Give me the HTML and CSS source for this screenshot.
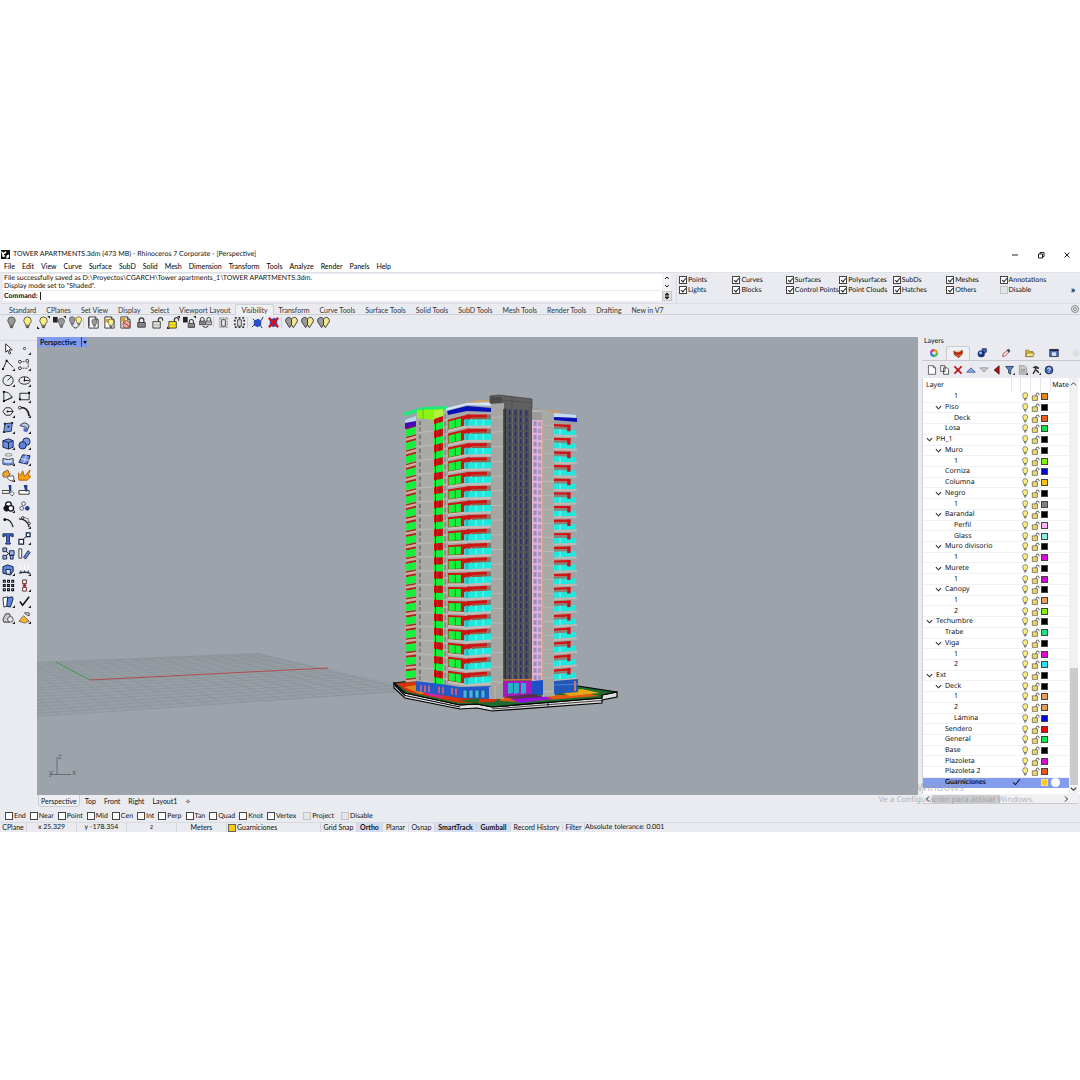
FILE: index.html
```html
<!DOCTYPE html>
<html lang="en">
<head>
<meta charset="utf-8">
<title>TOWER APARTMENTS.3dm - Rhinoceros 7 Corporate</title>
<link rel="stylesheet" href="styles.css">
</head>
<body>
<svg class="sprite" aria-hidden="true">
  <symbol id="bulb" viewBox="0 0 14 14"><path d="M7 1a4 4 0 0 0-4 4c0 2 2 3 2 5h4c0-2 2-3 2-5a4 4 0 0 0-4-4z" stroke="#555" stroke-width="1"/><path d="M5 11h4M5.500 12.500h3" stroke="#333"/></symbol>
  <symbol id="lock" viewBox="0 0 14 14"><path d="M4.500 7V4.500a2.500 2.500 0 0 1 5 0V7" fill="none" stroke="#333" stroke-width="1.300"/><path d="M3 7h8v5H3z" stroke="#333"/><path d="M4 9h6M4 11h6" stroke="#555" stroke-width=".6"/></symbol>
  <symbol id="unlock" viewBox="0 0 14 14"><path d="M8 7V3.500a2.300 2.300 0 0 1 4.500 0V5" fill="none" stroke="#333" stroke-width="1.300"/><path d="M2 6h8v7H2z" stroke="#443"/><path d="M3 9.500h6" stroke="#997" stroke-width=".6"/></symbol>
  <symbol id="corner" viewBox="0 0 14 14"><path d="M14 11v3h-3z" fill="#222"/></symbol>
  <symbol id="page" viewBox="0 0 14 14"><path d="M2 1h7l3 3v9H2z" fill="#fff" stroke="#333"/><path d="M9 1v3h3" fill="none" stroke="#333"/></symbol>
  <symbol id="split" viewBox="0 0 14 14"><path d="M4 1.500a3.500 3.500 0 0 0-3 5l4 6 2-3V4C6.500 2 5.500 1.500 4 1.500z" fill="#9a9a9a" stroke="#333"/><path d="M10 1.500a3.500 3.500 0 0 1 3 5l-4 6-2-3V4c.5-2 1.500-2.500 3-2.500z" fill="#f4e68c" stroke="#333"/></symbol>
  <symbol id="chev" viewBox="0 0 8 8"><path d="M1 2.500L4 5.500 7 2.500" fill="none" stroke="#333" stroke-width="1.300"/></symbol>
</svg>

<main class="app">
  <header class="titlebar">
    <svg class="logo" viewBox="0 0 10 10"><path d="M0 0h10v10H0z" fill="#111"/><path d="M0 1l3 2 2-2 1 2-3 2 2 2-3 1zM6 6l3-1v3L6 10z" fill="#fff"/></svg>
    <h1>TOWER APARTMENTS.3dm (473 MB) - Rhinoceros 7 Corporate - [Perspective]</h1>
    <div class="winbtns">
      <button aria-label="Minimize"><svg viewBox="0 0 8 8"><path d="M1 4h6"/></svg></button>
      <button aria-label="Restore"><svg viewBox="0 0 8 8"><path d="M1.500 3h4v4h-4zM3 3V1.500h4v4H5.500"/></svg></button>
      <button aria-label="Close"><svg viewBox="0 0 8 8"><path d="M1.500 1.500l5 5M6.500 1.500l-5 5"/></svg></button>
    </div>
  </header>
  <nav class="menubar">
    <button>File</button><button>Edit</button><button>View</button><button>Curve</button><button>Surface</button><button>SubD</button><button>Solid</button><button>Mesh</button><button>Dimension</button><button>Transform</button><button>Tools</button><button>Analyze</button><button>Render</button><button>Panels</button><button>Help</button>
  </nav>

  <section class="command">
    <div class="console">
      <div class="history"><p>File successfully saved as D:\Proyectos\CGARCH\Tower apartments_1\TOWER APARTMENTS.3dm.</p><p>Display mode set to "Shaded".</p></div>
      <div class="prompt"><label for="cmd">Command:</label><input id="cmd" type="text"></div>
    </div>
    <div class="consolebar">
      <svg viewBox="0 0 8 8"><path d="M2 5l2-2 2 2"/></svg>
      <svg viewBox="0 0 8 8"><path d="M2 3l2 2 2-2"/></svg>
      <button aria-label="Command history"><svg viewBox="0 0 8 8"><path d="M2 3l2-2 2 2zM2 5l2 2 2-2z" fill="#222"/></svg></button>
    </div>
    <div class="filters">
      <label><input type="checkbox" checked>Points</label><label><input type="checkbox" checked>Curves</label><label><input type="checkbox" checked>Surfaces</label><label><input type="checkbox" checked>Polysurfaces</label><label><input type="checkbox" checked>SubDs</label><label><input type="checkbox" checked>Meshes</label><label><input type="checkbox" checked>Annotations</label>
      <label><input type="checkbox" checked>Lights</label><label><input type="checkbox" checked>Blocks</label><label><input type="checkbox" checked>Control Points</label><label><input type="checkbox" checked>Point Clouds</label><label><input type="checkbox" checked>Hatches</label><label><input type="checkbox" checked>Others</label><label><input type="checkbox" disabled>Disable</label>
    </div>
    <button class="more" aria-label="More filters">»</button>
  </section>

  <nav class="tooltabs">
    <button>Standard</button><button>CPlanes</button><button>Set View</button><button>Display</button><button>Select</button><button>Viewport Layout</button><button class="on">Visibility</button><button>Transform</button><button>Curve Tools</button><button>Surface Tools</button><button>Solid Tools</button><button>SubD Tools</button><button>Mesh Tools</button><button>Render Tools</button><button>Drafting</button><button>New in V7</button>
    <svg class="gear" viewBox="0 0 10 10"><circle cx="5" cy="5" r="3.500"/><circle cx="5" cy="5" r="1.500"/></svg>
  </nav>

  <div class="toolbar">
    <button aria-label="Hide"><svg viewBox="0 0 14 14"><use href="#bulb" fill="#999"/></svg></button>
    <button aria-label="Show"><svg viewBox="0 0 14 14"><use href="#bulb" fill="#fbf07c"/></svg></button>
    <button aria-label="Show selected"><svg viewBox="0 0 14 14"><use href="#bulb" fill="#fbf07c"/><path d="M0 14v-3l3 3zM14 0v3l-3-3z" fill="#222"/></svg></button>
    <button aria-label="Isolate"><svg viewBox="0 0 14 14"><path d="M0 1h5v6H0z" fill="#222"/><use href="#bulb" x="3" y="1" fill="#999" width="12" height="13"/><path d="M14 0v3l-3-3z" fill="#222"/></svg></button>
    <button aria-label="Swap hidden"><svg viewBox="0 0 14 14"><use href="#bulb" x="-2" y="0" width="11" height="11" fill="#999"/><use href="#bulb" x="5" y="0" width="11" height="11" fill="#fbf07c"/><path d="M4 11q3 4 6 0" stroke="#222" fill="none"/></svg></button>
    <hr>
    <button aria-label="Hide in detail"><svg viewBox="0 0 14 14"><use href="#page"/><use href="#bulb" x="3" y="2" width="10" height="11" fill="#999"/><path d="M2 2v9" stroke="#222"/></svg></button>
    <button aria-label="Show in detail"><svg viewBox="0 0 14 14"><use href="#page"/><path d="M2 3h5v4H2z" fill="#d9a227"/><use href="#bulb" x="3" y="2" width="11" height="12" fill="#fbf07c"/></svg></button>
    <button aria-label="Hide layer in detail"><svg viewBox="0 0 14 14"><use href="#page"/><path d="M2 2h5v4H2z" fill="#d9a227"/><circle cx="8" cy="9" r="4" fill="#eab0a8" stroke="#843"/><path d="M5 7l6 4" stroke="#a22"/></svg></button>
    <button aria-label="Lock"><svg viewBox="0 0 14 14"><use href="#lock" fill="#999"/></svg></button>
    <button aria-label="Unlock"><svg viewBox="0 0 14 14"><use href="#unlock" fill="#ddd"/></svg></button>
    <button aria-label="Unlock selected"><svg viewBox="0 0 14 14"><use href="#unlock" fill="#ffe000"/><path d="M0 14v-3l3 3zM14 0v3l-3-3z" fill="#222"/></svg></button>
    <button aria-label="Isolate lock"><svg viewBox="0 0 14 14"><path d="M0 1h5v6H0z" fill="#222"/><use href="#lock" x="3" y="2" width="12" height="12" fill="#999"/><path d="M14 0v3l-3-3z" fill="#222"/></svg></button>
    <button aria-label="Swap locked"><svg viewBox="0 0 14 14"><use href="#lock" x="-2" y="0" width="11" height="11" fill="#999"/><use href="#lock" x="5" y="0" width="11" height="11" fill="#ddd"/><path d="M4 11q3 3 6 0" stroke="#222" fill="none"/></svg></button>
    <hr>
    <button aria-label="Control points on"><svg viewBox="0 0 14 14"><path d="M3 2v10M11 2v10M3 2h8M3 12h8" stroke="#aaa" stroke-width="2" stroke-dasharray="2 1" fill="none"/><path d="M5 4h4v7H5z" fill="#eee" stroke="#444"/></svg></button>
    <button aria-label="Control points off"><svg viewBox="0 0 14 14"><path d="M2 2h10v10H2z" stroke="#333" stroke-width="2" stroke-dasharray="2 2" fill="none"/><path d="M5 4h4v7H5z" fill="#ddd" stroke="#444"/></svg></button>
    <hr>
    <button aria-label="Show edges"><svg viewBox="0 0 14 14"><path d="M3 5l5-2 3 2v5l-4 2-4-2z" fill="#2850c8"/><path d="M1 12l3-3M11 5l2-4M2 3l2 2M10 10l2 3" stroke="#223"/></svg></button>
    <button aria-label="Hide edges"><svg viewBox="0 0 14 14"><path d="M3 4l5-2 3 2v6l-4 2-4-2z" fill="#2850c8"/><path d="M2 2l10 10M12 2L2 12" stroke="#d0101c" stroke-width="2.500"/></svg></button>
    <hr>
    <button aria-label="Hide object"><svg viewBox="0 0 14 14"><use href="#split"/></svg></button>
    <button aria-label="Show object"><svg viewBox="0 0 14 14"><use href="#split"/></svg></button>
    <button aria-label="Swap object"><svg viewBox="0 0 14 14"><use href="#split"/></svg></button>
  </div>

  <div class="workspace">
    <aside class="tools">
      <button aria-label="Select"><svg viewBox="0 0 14 14"><path d="M4 2v9l2-2 2 4 1.500-1-2-3.500H11z" fill="#fff" stroke="#222"/></svg></button>
      <button aria-label="Point"><svg viewBox="0 0 14 14"><circle cx="7" cy="7" r="1.200" fill="#fff" stroke="#333"/><use href="#corner"/></svg></button>
      <button aria-label="Polyline"><svg viewBox="0 0 14 14"><path d="M1 12L5 3l7 7" fill="none" stroke="#222"/><path d="M0 11h2v2H0zM4 2h2v2H4z"/><use href="#corner"/></svg></button>
      <button aria-label="Control point curve"><svg viewBox="0 0 14 14"><path d="M2 4h5M11 2v8M2 11h9" fill="none" stroke="#333" stroke-dasharray="2 1"/><circle cx="2" cy="4" r="1.500" fill="#fff" stroke="#222"/><circle cx="10" cy="3" r="1.500" fill="#fff" stroke="#222"/><circle cx="2" cy="11" r="1.500" fill="#fff" stroke="#222"/><use href="#corner"/></svg></button>
      <button aria-label="Circle"><svg viewBox="0 0 14 14"><circle cx="6.500" cy="7" r="5.500" fill="none" stroke="#222"/><path d="M6 7l4-4" stroke="#222"/><use href="#corner"/></svg></button>
      <button aria-label="Ellipse"><svg viewBox="0 0 14 14"><ellipse cx="7" cy="7" rx="6" ry="4" fill="none" stroke="#222"/><path d="M7 3v4h5" stroke="#222" fill="none"/><circle cx="7" cy="7" r="1"/><use href="#corner"/></svg></button>
      <button aria-label="Arc"><svg viewBox="0 0 14 14"><path d="M2 12V2q6 0 9 6zL11 8" fill="none" stroke="#222"/><path d="M1 1h2v2H1zM1 11h2v2H1z"/><use href="#corner"/></svg></button>
      <button aria-label="Rectangle"><svg viewBox="0 0 14 14"><path d="M2 3.500h10v7H2z" fill="none" stroke="#222"/><path d="M1 9h2v2H1zM11 2h2v2h-2z"/><use href="#corner"/></svg></button>
      <button aria-label="Polygon"><svg viewBox="0 0 14 14"><path d="M4 3h5l3 4-3 4H4L1 7z" fill="none" stroke="#222"/><path d="M6 7h6" stroke="#222"/><circle cx="6" cy="7" r="1"/><use href="#corner"/></svg></button>
      <button aria-label="Fillet"><svg viewBox="0 0 14 14"><path d="M2 3q9-1 10 9" fill="none" stroke="#222" stroke-width="1.800"/><circle cx="2" cy="3" r="1.500" fill="#fff" stroke="#222"/><use href="#corner"/></svg></button>
      <button aria-label="Surface"><svg viewBox="0 0 14 14"><path d="M3 3l8-1-1 9-8 1z" fill="#7896e4" stroke="#234"/><path d="M2 2h2v2H2zM10 1h2v2h-2zM1 11h2v2H1zM6 5h2v2H6z" fill="#123"/><use href="#corner"/></svg></button>
      <button aria-label="Sweep"><svg viewBox="0 0 14 14"><path d="M2 5q5-6 10 0l-2 5q0-4-4-4z" fill="#b7c7f2" stroke="#333"/><path d="M6 7l5 3-2 2-3-1z" fill="#4468cc"/><use href="#corner"/></svg></button>
      <button aria-label="Box"><svg viewBox="0 0 14 14"><path d="M1 4l6-2 5 2v7l-5 2-6-2z" fill="#6d8ee6" stroke="#124"/><path d="M1 4l6 2 5-2M7 6v7" stroke="#124" fill="none"/><use href="#corner"/></svg></button>
      <button aria-label="Sphere"><svg viewBox="0 0 14 14"><circle cx="9" cy="5" r="4" fill="#7b9aec" stroke="#124"/><circle cx="5" cy="9" r="4" fill="#5f80dc" stroke="#124"/><use href="#corner"/></svg></button>
      <button aria-label="Extrude"><svg viewBox="0 0 14 14"><ellipse cx="7" cy="2" rx="4" ry="1.300" fill="#fff" stroke="#777"/><path d="M1 6q6 2 11 0v6q-5 2-11 0z" fill="#cbd7f6" stroke="#234"/><path d="M2 10q5 2 9 0v2q-5 1-9 0z" fill="#5578d6"/><use href="#corner"/></svg></button>
      <button aria-label="Patch"><svg viewBox="0 0 14 14"><path d="M5 2l8 1-3 9-9-2z" fill="#6f90e8" stroke="#124"/><path d="M3 6l9 2M9 2L6 11" stroke="#dde" /><use href="#corner"/></svg></button>
      <button aria-label="Join"><svg viewBox="0 0 14 14"><path d="M2 3h2l1-2 2 1v2l2 1-1 3H6L4 9 1 8V5z" fill="#f0a92c" stroke="#853"/><path d="M7 7l2 1 3-1 1 3-2 3-3-1-2-2z" fill="#fff" stroke="#555"/><use href="#corner"/></svg></button>
      <button aria-label="Explode"><svg viewBox="0 0 14 14"><path d="M1 12L0 4l3 3 2-5 2 6 6-7-2 6 3 1-4 4z" fill="#f6a313" stroke="#b35b0a"/></svg></button>
      <button aria-label="Trim"><svg viewBox="0 0 14 14"><path d="M0 7h8v3H0z" fill="#fff" stroke="#333"/><path d="M7 1h3v7H8z" fill="#1b3f88"/><path d="M8 10l3-2 2 2-2 3z" fill="#fff" stroke="#555"/></svg></button>
      <button aria-label="Split"><svg viewBox="0 0 14 14"><path d="M1 7h11v4H1z" fill="#fff" stroke="#333"/><path d="M6 1h4v7H8z" fill="#1b3f88"/></svg></button>
      <button aria-label="Boolean"><svg viewBox="0 0 14 14"><circle cx="7" cy="5" r="3" fill="#fff" stroke="#112" stroke-width="1.500"/><circle cx="5" cy="9" r="3" fill="#112" stroke="#112"/><circle cx="9.500" cy="9" r="3" fill="#fff" stroke="#112" stroke-width="1.500"/><use href="#corner"/></svg></button>
      <button aria-label="Group"><svg viewBox="0 0 14 14"><circle cx="6" cy="4" r="2" fill="#fff" stroke="#446"/><circle cx="4" cy="9" r="2" fill="#fff" stroke="#446"/><circle cx="10" cy="9" r="2.500" fill="#248"/></svg></button>
      <button aria-label="Offset"><svg viewBox="0 0 14 14"><path d="M2 4q7-2 10 8" fill="none" stroke="#222" stroke-width="1.400"/><circle cx="3" cy="4" r="1.500"/></svg></button>
      <button aria-label="Blend"><svg viewBox="0 0 14 14"><path d="M1 3q9 0 11 9" fill="none" stroke="#222" stroke-width="1.400"/><path d="M5 1l6 2v4" fill="none" stroke="#777"/><circle cx="5" cy="2" r="1.300" fill="#fff" stroke="#222"/><circle cx="12" cy="8" r="1.300" fill="#fff" stroke="#222"/><use href="#corner"/></svg></button>
      <button aria-label="Text"><svg viewBox="0 0 14 14"><path d="M1 2h11v3h-1.500L10 4H8v7l1 1v1H4v-1l1-1V4H3l-.5 1H1z" fill="#4a6fd8" stroke="#124"/></svg></button>
      <button aria-label="Scale"><svg viewBox="0 0 14 14"><path d="M1 8h5v5H1zM9 1h4v4H9z" fill="#fff" stroke="#124" stroke-width="1.300"/><path d="M6 7l3-2" stroke="#222"/><use href="#corner"/></svg></button>
      <button aria-label="Array"><svg viewBox="0 0 14 14"><path d="M1 1h4v4H1zM8 4h5v5H8zM1 9h4v4H1zM9 9h3v4H9z" fill="#9eb2ea" stroke="#124"/><path d="M5 5l4 4M5 9l3-3" stroke="#222"/></svg></button>
      <button aria-label="Orient"><svg viewBox="0 0 14 14"><path d="M1 2h3v10H1z" fill="#fff" stroke="#333"/><path d="M6 11l5-7 2 2-5 7z" fill="#6f90e8" stroke="#124"/></svg></button>
      <button aria-label="Cap"><svg viewBox="0 0 14 14"><path d="M1 4l5-2 6 2v5l-3 4-4-1-4-1z" fill="#6187e4" stroke="#124"/><path d="M4 7h5v5H5z" fill="#dfe7fb" stroke="#124"/><use href="#corner"/></svg></button>
      <button aria-label="Project"><svg viewBox="0 0 14 14"><path d="M1 11q6-2 12 0" fill="none" stroke="#246" stroke-width="1.500"/><path d="M3 2v6M7 2v6M11 2v6" stroke="#fff"/><path d="M3 8v3M7 8v2M11 8v3" stroke="#333"/><use href="#corner"/></svg></button>
      <button aria-label="Rectangular array"><svg viewBox="0 0 14 14"><path d="M1.500 1.500h2v2h-2zM6 1.500h2v2H6zM10.500 1.500h2v2h-2zM1.500 6h2v2h-2zM6 6h2v2H6zM10.500 6h2v2h-2zM1.500 10.500h2v2h-2zM6 10.500h2v2H6zM10.500 10.500h2v2h-2z" fill="#fff" stroke="#112" stroke-width="1.200"/></svg></button>
      <button aria-label="Block"><svg viewBox="0 0 14 14"><path d="M5 1h4v4H5zM5 9h4v4H5z" fill="#fff" stroke="#522"/><path d="M7 5v4" stroke="#a22" stroke-width="2.500"/><path d="M5 7h4" stroke="#a22"/><use href="#corner"/></svg></button>
      <button aria-label="Section"><svg viewBox="0 0 14 14"><path d="M1 3l5-1v10l-4 1z" fill="#fff" stroke="#333"/><path d="M6 3l5-1 1 2-3 9-4-1z" fill="#5f84e4" stroke="#124"/><use href="#corner"/></svg></button>
      <button aria-label="Check"><svg viewBox="0 0 14 14"><path d="M2 7l3 4 7-9" fill="none" stroke="#111" stroke-width="1.700"/><use href="#corner"/></svg></button>
      <button aria-label="Mesh"><svg viewBox="0 0 14 14"><path d="M1 9l3-6h4l3 7-3 2H2z" fill="#ccc" stroke="#333"/><circle cx="9" cy="9" r="3" fill="#eee" stroke="#444"/><use href="#corner"/></svg></button>
      <button aria-label="Render"><svg viewBox="0 0 14 14"><path d="M1 11l5-6 6 6-5 2z" fill="#f1b53a" stroke="#864"/><path d="M7 2h5v3L9 4z" fill="#fff" stroke="#333"/><use href="#corner"/></svg></button>
    </aside>

    <section class="center">
      <div class="viewport">
        <svg class="scene" id="scene" viewBox="37 337 881 458" preserveAspectRatio="xMidYMid slice" role="img" aria-label="Shaded tower model"></svg>
        <button class="viewtitle">Perspective<span class="drop"></span></button>
      </div>
      <nav class="viewtabs"><button class="on">Perspective</button><button>Top</button><button>Front</button><button>Right</button><button>Layout1</button><button aria-label="New layout">✧</button></nav>
    </section>

    <aside class="panel">
      <h2>Layers</h2>
      <div class="paneltabs">
        <button aria-label="Properties"><svg viewBox="0 0 14 14" fill="none" stroke-width="3"><path d="M7 3a4 4 0 0 1 4 4" stroke="#e6a020"/><path d="M11 7a4 4 0 0 1-4 4" stroke="#3ec43e"/><path d="M7 11a4 4 0 0 1-4-4" stroke="#2a7cf0"/><path d="M3 7a4 4 0 0 1 4-4" stroke="#d934a0"/></svg></button>
        <button class="on" aria-label="Layers"><svg viewBox="0 0 14 14"><path d="M1 3l6 1 6-2v5l-5 5-6-4z" fill="#c2280c" stroke="#631"/><path d="M1 3l6-1 6 0-6 3z" fill="#f4c8a0"/><path d="M4 8l4 2 3-3" stroke="#f69a50" fill="none"/></svg></button>
        <button aria-label="Rendering"><svg viewBox="0 0 14 14"><circle cx="6" cy="8" r="5" fill="#17337c"/><circle cx="5" cy="7" r="2" fill="#9ac3ff"/><path d="M7 1h6v5H9z" fill="#3465d2" stroke="#123"/></svg></button>
        <button aria-label="Materials"><svg viewBox="0 0 14 14"><path d="M2 12l1-4 7-6 2 3-6 6z" fill="#f7dccf" stroke="#934"/><path d="M8 3l3 4 2-3-2-3z" fill="#3a5068"/></svg></button>
        <button aria-label="Libraries"><svg viewBox="0 0 14 14"><path d="M1 3h4l1 2h5v7H1z" fill="#e5bd2c" stroke="#764"/><path d="M3 7h10l-2 5H1z" fill="#fce680" stroke="#764"/></svg></button>
        <button aria-label="Display"><svg viewBox="0 0 14 14"><path d="M1 2h12v10H1z" fill="#456bbb" stroke="#223"/><path d="M1 3h12" stroke="#222" stroke-width="2"/><path d="M4 6h6v5H4z" fill="#cfe0ff"/></svg></button>
        <button class="dim" aria-label="Panel options"><svg viewBox="0 0 14 14" fill="none" stroke="#ccc"><circle cx="7" cy="7" r="4"/><circle cx="7" cy="7" r="1.500"/></svg></button>
      </div>
      <div class="paneltools">
        <button aria-label="New layer"><svg viewBox="0 0 14 14"><use href="#page"/></svg></button>
        <button aria-label="New sublayer"><svg viewBox="0 0 14 14"><path d="M1 1h6v8H1zM5 4h5l2 2v7H5z" fill="#fff" stroke="#222"/></svg></button>
        <button aria-label="Delete"><svg viewBox="0 0 14 14"><path d="M2 2l10 10M12 2L2 12" stroke="#c20a0a" stroke-width="2.200"/></svg></button>
        <button aria-label="Move up"><svg viewBox="0 0 14 14"><path d="M1 10l6-6 6 6z" fill="#8dabf0" stroke="#248"/></svg></button>
        <button aria-label="Move down"><svg viewBox="0 0 14 14"><path d="M1 4l6 6 6-6z" fill="#ccc" stroke="#888"/></svg></button>
        <button aria-label="Move to parent"><svg viewBox="0 0 14 14"><path d="M10 1v12L3 7z" fill="#a01414" stroke="#500"/></svg></button>
        <button aria-label="Filter"><svg viewBox="0 0 14 14"><path d="M1 2h11L8 7v6l-3-2V7z" fill="#5f80cc" stroke="#123"/><use href="#corner"/></svg></button>
        <button aria-label="Columns"><svg viewBox="0 0 14 14"><path d="M2 1h7l3 3v9H2z" fill="#ccc" stroke="#888"/><path d="M4 6h6M4 8h6M4 10h6" stroke="#888"/><use href="#corner"/></svg></button>
        <button aria-label="Tools"><svg viewBox="0 0 14 14"><path d="M2 4l4-3 5 2v3L8 5 4 13 2 12l4-7z" fill="#333"/><path d="M7 7l4 4" stroke="#222" stroke-width="2"/><use href="#corner"/></svg></button>
        <button aria-label="Help"><svg viewBox="0 0 14 14"><circle cx="7" cy="7" r="5.500" fill="#3c66b8" stroke="#113"/><path d="M5 6q0-2 2-2t2 1.500-2 2V9M7 10v1.200" stroke="#fff" stroke-width="1.300" fill="none"/></svg></button>
      </div>
      <div class="list">
        <table class="layers">
          <thead><tr><th class="name">Layer</th><th class="mark"></th><th class="ico"></th><th class="ico"></th><th class="ico"></th><th class="mat">Mate</th></tr></thead>
          <tbody id="layers"></tbody>
        </table>
        <div class="vscroll"><svg viewBox="0 0 8 8"><path d="M1 5.500l3-3 3 3" fill="none" stroke="#333"/></svg><i></i><svg viewBox="0 0 8 8"><use href="#chev"/></svg></div>
      </div>
      <div class="hscroll"><svg viewBox="0 0 8 8"><path d="M5 1.500L2.500 4 5 6.500"/></svg><i></i><svg viewBox="0 0 8 8"><path d="M3 1.500L5.500 4 3 6.500"/></svg></div>
    </aside>
    <div class="activate"><strong>Activar Windows</strong><span>Ve a Configuración para activar Windows.</span></div>
  </div>

  <div class="osnap">
    <label><input type="checkbox">End</label><label><input type="checkbox">Near</label><label><input type="checkbox">Point</label><label><input type="checkbox">Mid</label><label><input type="checkbox">Cen</label><label><input type="checkbox">Int</label><label><input type="checkbox">Perp</label><label><input type="checkbox">Tan</label><label><input type="checkbox">Quad</label><label><input type="checkbox">Knot</label><label><input type="checkbox">Vertex</label><label class="wide"><input type="checkbox" disabled>Project</label><label class="wide"><input type="checkbox" disabled>Disable</label>
  </div>
  <footer class="status">
    <button class="c28">CPlane</button><span class="c50">x 25.329</span><span class="c50">y -178.354</span><span class="c50">z</span><button class="c50">Meters</button><button class="current"><i></i>Guarniciones</button><button class="c38">Grid Snap</button><button class="c26 on">Ortho</button><button class="c26">Planar</button><button class="c26">Osnap</button><button class="c42 on">SmartTrack</button><button class="c34 on">Gumball</button><button class="c52">Record History</button><button class="c22">Filter</button><span class="tol">Absolute tolerance: 0.001</span>
  </footer>
</main>
<script src="app.js"></script>
</body>
</html>
```

FILE: styles.css
```css
* { box-sizing: border-box; }
body { margin: 0; padding-top: 248px; background: #fff; color: #111; font: 7px/8px Lato, "Noto Sans", sans-serif; text-rendering: geometricPrecision; }
button { margin: 0; padding: 0; border: 0; background: none; color: inherit; font: inherit; white-space: nowrap; }
h1, h2, p { margin: 0; font: inherit; }
svg { display: block; }
.sprite { position: absolute; width: 0; height: 0; }
.app { background: #e9ebf0; overflow: hidden; }

.titlebar { display: flex; align-items: center; height: 13px; padding-left: 1px; gap: 3px; background: #fff; }
.titlebar h1 { flex: 1; white-space: nowrap; line-height: 7px; }
.logo { width: 9px; height: 9px; }
.winbtns { display: flex; }
.winbtns button { width: 26px; padding: 0 9px; }
.winbtns svg { width: 8px; height: 8px; fill: none; stroke: #222; }
.menubar { display: flex; gap: 7px; height: 11px; padding-left: 4px; background: #fff; color: #000; line-height: 7px; }

.command { display: flex; height: 32px; padding: 1px 0 0 3px; border-top: 1px solid #dfe1e6; border-bottom: 1px solid #dcdee4; }
.console { flex: 1; display: flex; flex-direction: column; gap: 1px; height: 27px; }
.history { height: 16px; padding-left: 1px; background: #fff; white-space: nowrap; }
.prompt { display: flex; align-items: center; height: 10px; padding-left: 1px; background: #fff; font-weight: 700; }
.prompt input { flex: 1; height: 8px; margin-left: 2px; padding: 0; border: 0; border-left: 1px solid #222; background: none; font: inherit; }
.consolebar { display: flex; flex-direction: column; align-items: center; width: 9px; height: 27px; background: #f1f2f5; }
.consolebar svg { width: 8px; height: 8px; fill: none; stroke: #222; }
.consolebar button { margin-top: 1px; border: 1px solid #c4c6ca; background: #ddd; }
.filters { display: grid; grid-template-columns: repeat(7, 1fr); grid-auto-rows: 9px; row-gap: 1px; width: 377px; margin-left: 5px; padding: 1px 0 0 2px; border-left: 1px solid #dcdee4; }
label { display: flex; align-items: center; white-space: nowrap; }
input[type="checkbox"] { appearance: none; position: relative; flex: none; width: 8px; height: 8px; margin: 0 1px 0 0; border: 1px solid #444; background: #fff; }
input[type="checkbox"]:checked::after { content: ""; position: absolute; left: 2px; top: 0; width: 2px; height: 4px; border: solid #222; border-width: 0 1px 1px 0; transform: rotate(40deg); }
input[type="checkbox"]:disabled { border-color: #c0c2c6; background: #e4e5e8; }
.more { width: 27px; padding-left: 13px; font-size: 10px; font-weight: 700; }

.tooltabs { display: flex; height: 11px; padding-left: 4px; border-bottom: 1px solid #cdd0d6; color: #333; }
.tooltabs button { padding: 0 5px; line-height: 12px; }
.tooltabs .on { height: 11px; border: 1px solid #cdd0d6; border-bottom: 0; border-radius: 3px 3px 0 0; line-height: 10px; background: #eff0f4; }
.gear { width: 10px; height: 10px; margin-left: auto; fill: none; stroke: #888; }
.toolbar { display: flex; align-items: center; height: 15px; padding-left: 3px; }
.toolbar button { width: 16px; padding: 0 2px; }
.toolbar svg { width: 13px; height: 13px; }
.toolbar hr { width: 1px; height: 11px; margin: 0 1px 0 0; border: 0; background: #cdd0d6; }

.workspace { position: relative; display: grid; grid-template-columns: 36px 1fr 158px; padding-top: 6px; }
.tools { display: grid; grid-template-columns: 16px 16px; grid-template-rows: repeat(18, 1fr); place-items: center; height: 285px; margin-top: 4px; border-top: 1px solid #d5d7dc; }
.tools svg { width: 13px; height: 13px; }
.tools button { padding-left: 1px; }
.center { display: flex; flex-direction: column; padding: 1px 4px 0 1px; }
.viewport { position: relative; flex: 1; min-height: 200px; background: #9ca3ab; }
.scene { position: absolute; inset: 0; width: 100%; height: 100%; }
.scene text { fill: #5c6269; font: 8px "Noto Sans", sans-serif; }
.viewtitle { position: absolute; left: 0; top: 0; display: flex; height: 10px; padding: 0 0 0 3px; background: #7f9bf0; color: #112; font-weight: 700; line-height: 10px; }
.drop { width: 6px; height: 10px; margin-left: 4px; border-left: 1px solid #446; }
.drop::after { content: ""; display: block; margin: 4px 0 0 1px; width: 0; border: solid transparent; border-width: 3px 2px 0; border-top-color: #112; }
.viewtabs { display: flex; gap: 8px; height: 12px; padding-left: 1px; line-height: 12px; }
.viewtabs .on { margin-right: -3px; padding: 0 2px; border: 1px solid #c9ccd2; border-top: 0; border-radius: 0 0 4px 4px; background: #eff0f4; }

.panel { display: flex; flex-direction: column; padding-bottom: 3px; }
.panel h2 { height: 10px; padding-left: 2px; line-height: 11px; }
.paneltabs { display: flex; height: 15px; border-bottom: 1px solid #c8cad0; overflow: hidden; }
.paneltabs button { flex: none; width: 24px; padding: 0 7px; }
.paneltabs .on { padding: 0 6px; border: 1px solid #c8cad0; border-bottom: 0; border-radius: 3px 3px 0 0; background: #f0f1f5; }
.paneltabs svg, .paneltools svg { width: 10px; height: 10px; }
.paneltabs .dim { width: 20px; padding: 0 5px; }
.paneltools { display: flex; align-items: center; height: 17px; padding-left: 5px; gap: 3px; }
.list { display: flex; align-items: flex-start; height: 416px; background: #fff; border-left: 1px solid #d0d2d6; }
.layers { flex: 1; height: 410px; border-collapse: collapse; table-layout: fixed; font-family: "Noto Sans", "Open Sans", sans-serif; }
.layers th, .layers td { padding: 0; font-weight: 400; text-align: left; line-height: 9px; white-space: nowrap; overflow: hidden; }
.layers th { height: 14px; border-right: 1px solid #e4e6ea; }
.layers th.name { padding-left: 3px; }
.layers th.mat { padding-left: 1px; border: 0; }
.mark { width: 9px; }
.ico { width: 10px; }
.mat { width: 17px; }
.layers td { border-bottom: 1px solid #f0f1f3; }
.layers svg { width: 9px; height: 9px; }
.d0 { padding-left: 3px; }
.d1 { padding-left: 12px; }
.d2 { padding-left: 21px; }
.d0, .d1, .d2 { display: flex; align-items: center; }
.twist { flex: none; width: 10px; height: 7px; }
.layers .twist svg { width: 7px; height: 7px; }
.sw { display: block; width: 7px; height: 7px; border: 1px solid #444; }
.layers .sel td { background: #839cec; border-bottom: 0; font-family: Lato, sans-serif; font-weight: 700; }
.sel .sw { border-color: #f8e08a; }
.dot { display: block; width: 9px; height: 9px; border-radius: 5px; background: #fff; }
.vscroll { display: flex; flex-direction: column; align-items: center; align-self: stretch; width: 9px; margin-right: 2px; padding: 2px 0 1px; background: #f1f1f3; }
.vscroll svg { width: 7px; height: 8px; }
.vscroll i { width: 8px; height: 117px; margin-top: auto; background: #cbcbcd; }
.hscroll { display: flex; align-items: center; height: 10px; margin-right: 2px; padding: 0 8px 0 2px; border-bottom: 1px solid #c8cad0; background: #f1f1f3; }
.hscroll svg { width: 8px; height: 8px; fill: none; stroke: #222; }
.hscroll i { width: 68px; height: 8px; margin-right: auto; background: #cbcbcd; }
.activate { position: absolute; right: 46px; bottom: 2px; display: flex; flex-direction: column; color: #858b94; opacity: .6; pointer-events: none; }
.activate strong { height: 13px; font: 11px/13px "Noto Sans", sans-serif; color: #9a9fa6; }
.activate span { font: 8px/11px "Noto Sans", sans-serif; }

.osnap { display: flex; gap: 4px; align-items: center; height: 16px; padding: 2px 0 0 5px; border-bottom: 1px solid #d8dae0; }
.osnap .wide { margin-left: 3px; }
.status { display: flex; height: 9px; line-height: 9px; }
.status > * { flex: none; border-right: 1px solid #d3d5db; text-align: center; white-space: nowrap; }
.status .on { background: #d3dcf2; font-weight: 700; }
.status .current { display: flex; align-items: center; gap: 1px; width: 94px; padding-left: 1px; }
.current i { width: 8px; height: 8px; border: 1px solid #665; background: #fac814; }
.c22 { width: 22px; } .c26 { width: 26px; } .c28 { width: 27px; } .c34 { width: 34px; } .c38 { width: 36px; }
.c42 { width: 42px; } .c50 { width: 50px; } .c52 { width: 52px; }
.status .tol { border: 0; }
```

FILE: app.js
```js
// Layer tree: depth, name, colour, expandable
const layers = [
  [2, '1', '#f08218'], [1, 'Piso', '#000', 1], [2, 'Deck', '#e8601c'], [1, 'Losa', '#16e048'],
  [0, 'PH_1', '#000', 1], [1, 'Muro', '#000', 1], [2, '1', '#80f010'], [1, 'Corniza', '#0008d8'],
  [1, 'Columna', '#fcc014'], [1, 'Negro', '#000', 1], [2, '1', '#808080'], [1, 'Barandal', '#000', 1],
  [2, 'Perfil', '#fcb4f4'], [2, 'Glass', '#90ece8'], [1, 'Muro divisorio', '#000', 1], [2, '1', '#d80cd8'],
  [1, 'Murete', '#000', 1], [2, '1', '#c010d0'], [1, 'Canopy', '#000', 1], [2, '1', '#e8a060'],
  [2, '2', '#80f010'], [0, 'Techumbre', '#000', 1], [1, 'Trabe', '#10e878'], [1, 'Viga', '#000', 1],
  [2, '1', '#e008e0'], [2, '2', '#20e4f4'], [0, 'Ext', '#000', 1], [1, 'Deck', '#000', 1],
  [2, '1', '#e89c5c'], [2, '2', '#e89c5c'], [2, 'Lámina', '#0008e0'], [1, 'Sendero', '#e80c0c'],
  [1, 'General', '#14e84c'], [1, 'Base', '#000'], [1, 'Plazoleta', '#d80cd8'], [1, 'Plazoleta 2', '#e8581c'],
  [1, 'Guarniciones', '#fcc81c']
];
document.getElementById('layers').innerHTML = layers.map(([d, name, color, open], i) => {
  const sel = i === layers.length - 1;
  const twist = open ? '<svg viewBox="0 0 8 8"><use href="#chev"/></svg>' : '';
  const bulb = sel ? '' : '<svg viewBox="1 0 13 14"><use href="#bulb" width="14" height="14" fill="#fbf07c"/></svg>';
  const lock = sel ? '' : '<svg viewBox="0 0 14 14"><use href="#unlock" fill="#fbe470"/></svg>';
  const mark = sel ? '<svg viewBox="0 0 8 8"><path d="M1 4l2 2 4-5" fill="none" stroke="#124"/></svg>' : '';
  return `<tr${sel ? ' class="sel"' : ''}><td><div class="d${d}"><span class="twist">${twist}</span>${name}</div></td>` +
    `<td>${mark}</td><td>${bulb}</td><td>${lock}</td><td><span class="sw" style="background:${color}"></span></td>` +
    `<td>${sel ? '<span class="dot"></span>' : ''}</td></tr>`;
}).join('');

// Scene
const out = [];
const poly = (pts, fill, extra = '') => out.push(`<polygon points="${pts}" fill="${fill}" ${extra}/>`);
const line = (x1, y1, x2, y2, c, w = 1) => out.push(`<path d="M${x1} ${y1}L${x2} ${y2}" stroke="${c}" stroke-width="${w}"/>`);

// Ground grid
out.push('<clipPath id="gc"><path d="M37 662L258 653 415 688 395 693 37 717z"/></clipPath><g clip-path="url(#gc)">');
poly('37,662 258,653 415,688 395,693 37,717', '#989fa6');
for (let i = 0; i <= 20; i++) {
  const t = Math.pow(i / 20, 1.3);
  line(37, 662 + 55 * t, 258 + 157 * t, 653 + 37 * t, '#878e94', .5);
}
for (let a = -220; a <= 258; a += 14) line(a, 662 - (a - 37) * .04, 147 + (a - 56) * 1.33, 709 - (a - 56) * .09, '#878e94', .5);
out.push('</g>');
line(56, 662, 90, 680, '#3f9350');
line(90, 680, 328, 668, '#b04a52');
line(57, 757, 57, 775, '#666c73');
line(49, 774.5, 71, 774.5, '#666c73');
out.push('<text x="58" y="759">z</text><text x="49" y="775">y</text><text x="72" y="775">x</text>');

// Site slab
poly('394,683 405,693 460,705 477,704 492,707 602,698 602,695 617,692 617,697 602,700 602,703 492,711 477,708 460,709 405,698 394,688', '#ddd', 'stroke="#000" stroke-width="1.200"');
poly('394,683 420,680 578,686 617,692 602,695 602,698 492,707 477,704 460,705 405,693', '#1c6b30', 'stroke="#000" stroke-width="1.200"');
poly('396,683 416,682 450,690 500,698 494,702 460,703 408,692', '#d6300c');
poly('404,687 416,685 430,692 420,694', '#e0801c');
poly('420,690 436,692 445,698 430,696', '#c828a0');
poly('500,697 590,694 600,696 520,702 500,701', '#e05a10');
poly('560,692 582,689 600,693 570,696', '#e8a818');
poly('510,699 545,696 552,699 520,703', '#9610e0');
poly('458,701 480,698 478,703', '#186c20');
line(395, 685.5, 405, 695.5, '#000', 1.4);
line(405, 695.5, 460, 707, '#000');
line(492, 709, 602, 700.5, '#000', .7);
line(548, 702.5, 548, 706, '#000');

// Facade helper: bands are given as fractions of a floor and of the facade width
function facade(x0, x1, tl, tr, bl, br, n, bands) {
  const y = (u, t) => (tl + (tr - tl) * u) * (1 - t) + (bl + (br - bl) * u) * t;
  for (let i = 0; i < n; i++) for (const [u0, u1, a, b, c] of bands) {
    const s = (i + a) / n, e = (i + b) / n, xa = x0 + (x1 - x0) * u0, xb = x0 + (x1 - x0) * u1;
    poly(`${xa},${y(u0, s)} ${xb},${y(u1, s)} ${xb},${y(u1, e)} ${xa},${y(u0, e)}`, c);
  }
}
const wall = '#a9a9a6', red = '#d01414', green = '#14f03c', cyan = '#20e8dc', salmon = '#e0a8a0';

facade(406, 416, 427, 424, 682, 681, 19, [[0, 1, 0, 1, '#b9aaa4'], [0, 1, .05, .2, '#b02418'], [0, 1, .2, .72, green], [0, 1, .75, .87, '#8c3c20'], [-.05, 1, .87, 1.02, salmon]]);
poly('405,420 416,416 416,423 405,425', '#b8d8f0');
poly('405,423 416,421 416,426 405,429', '#4a08b8');
poly('416,414 434,410 434,684 416,682', wall);
facade(417, 433, 420, 418, 682, 684, 19, [[.12, .24, .1, .4, '#777'], [.12, .24, .55, .85, '#808080'], [0, 1, .9, .97, '#bdbdb8']]);
facade(434, 444, 417, 414, 684, 686, 19, [[0, 1, 0, .55, red], [0, 1, .5, 1, green], [.1, .2, 0, 1, '#5a2018'], [.55, .65, 0, .5, '#7a1810']]);
poly('443,410 449,408 449,687 443,686', '#b1b1ae');
facade(443, 449, 414, 412, 686, 687, 38, [[.25, .45, .1, .8, '#777'], [.7, .8, .1, .8, '#8d8d8d']]);
poly('403,413 423,407 447,406 446,410 418,412 405,416', '#1cec7c');
poly('417,410 443,409 434,420 417,418', '#8cf410');
poly('434,411 443,409 443,416 434,419', '#b4f040');
line(423, 409, 423, 419, '#4c9c20', .6);

poly('448,412 467,407 491,405 491,688 467,690 448,687', wall);
facade(448, 467, 418, 413, 683, 686, 19, [[0, 1, .12, .85, red], [.03, .68, .26, .82, green], [.36, .4, .26, .82, '#0a7030'], [0, 1, .86, 1, '#c8c0bc']]);
facade(467, 491, 413, 413, 686, 684, 19, [[0, .85, .1, .38, red], [0, .12, .1, .8, '#d41010'], [.2, .85, .3, .46, '#9a5a44'], [.85, 1, .1, .7, '#817872'], [-.12, 1, .45, .9, cyan], [-.05, .05, .4, .9, '#28b8c8'], [.35, .4, .45, .85, '#60f8f0'], [.65, .7, .45, .85, '#60f8f0'], [-.1, 1, .88, 1.04, '#c4bcb8']]);
poly('446,408 467,403 492,401 492,406 467,405 446,411', '#c3dcf4');
poly('447,411 467,406 492,408 492,412 467,411 448,415', '#0810b8');
poly('465,403 478,400 492,400 492,402', '#cfa070');
out.push('<path d="M448 409L467 404 491 404" fill="none" stroke="#eef6ff" stroke-dasharray="2 1"/>');

poly('490,396 499,395 532,399 532,411 504,409 490,403', '#606060', 'stroke="#333" stroke-width=".6"');
poly('490,397 502,397 502,403 490,403', '#4c4c4c');
line(490, 399, 532, 403, '#484848', .6);
line(512, 397, 512, 409, '#484848', .6);
poly('491,404 504,403 504,699 491,699', '#a6a6a3');
facade(491, 504, 404, 403, 697, 698, 20, [[0, 1, .9, .96, '#bababa']]);
poly('503,409 532,410 532,682 503,682', '#505356');
facade(503, 532, 409, 410, 681, 681, 38, [[.05, .1, 0, 1, '#2c2c30'], [.2, .26, .1, .8, '#303070'], [.4, .46, .1, .8, '#303070'], [.58, .64, .1, .8, '#303070'], [.78, .84, .1, .8, '#303070'], [.32, .34, 0, .8, '#7c7c7c'], [.52, .54, 0, .8, '#7c7c74'], [.7, .72, 0, .8, '#7c7c7c'], [.92, .94, 0, 1, '#777']]);

poly('532,408 543,409 543,420 532,420', '#9a9a98');
poly('532,420 543,420 543,682 532,682', '#e0b4d6');
facade(532, 543, 420, 421, 681, 681, 38, [[.15, .42, .15, .8, '#9c8cb4'], [.55, .85, .15, .8, '#ac98c0'], [.92, 1, 0, 1, '#f0c0e0']]);
line(532, 411, 543, 411, '#ccc');
poly('542,409 555,411 555,696 542,697', wall);
line(542.5, 420, 542.5, 690, '#d8a890', .8);
facade(543, 555, 412, 413, 693, 692, 20, [[0, 1, .9, .96, '#b8b8b6']]);
poly('554,420 570,422 576,422 576,682 554,684', '#a39f9c');
facade(554, 576, 423, 424, 682, 680, 19, [[.75, 1.1, 0, .5, '#9ca3ab'], [0, .75, .08, .26, red], [0, .6, .26, .45, '#8d8078'], [0, 1, .44, .85, cyan], [.6, .75, .08, .56, '#c81414'], [.25, .3, .44, .85, '#78f4f0'], [0, 1.04, .84, 1, '#c0b8b4']]);
poly('554,413 576,415 576,418 554,417', '#c3dcf4');
poly('554,417 577,418 577,422 554,420', '#0810b8');
poly('550,410 560,411 560,413 550,412', '#d09860');

// Podium
poly('416,681 448,685 460,687 491,686 491,699 460,698 416,691', '#2458c8');
for (const x of [420, 424, 428, 438, 442, 451, 455]) poly(`${x},${685 + (x - 420) * .1} ${x + 2},${685 + (x - 420) * .1} ${x + 2},${692 + (x - 420) * .1} ${x},${691 + (x - 420) * .1}`, '#c06080');
for (const x of [463, 469, 475, 481]) poly(`${x},690 ${x + 4},690 ${x + 4},698 ${x},698`, '#40b8d8', 'stroke="#163a90" stroke-width=".6"');
poly('489,687 504,684 504,699 489,699', '#a3a3a0');
line(495, 686, 495, 699, '#ccc', .6);
poly('503,681 532,681 532,694 503,697', '#a818c0');
for (const x of [508, 514, 521]) poly(`${x},683 ${x + 5},683 ${x + 5},693 ${x},694`, '#28b0c8');
line(503, 680, 532, 679.5, '#d87830', 1.4);
poly('532,681 543,680 543,695 532,694', '#1c50c4');
poly('554,681 578,679 578,692 554,694', '#2458b8');
line(554, 685, 578, 684, '#6090e0', .7);
poly('574,681 576,681 576,691 574,691', '#c07878');
poly('503,697 532,694 543,697 515,699', '#5c2a58');
document.getElementById('scene').innerHTML = out.join('');
```
